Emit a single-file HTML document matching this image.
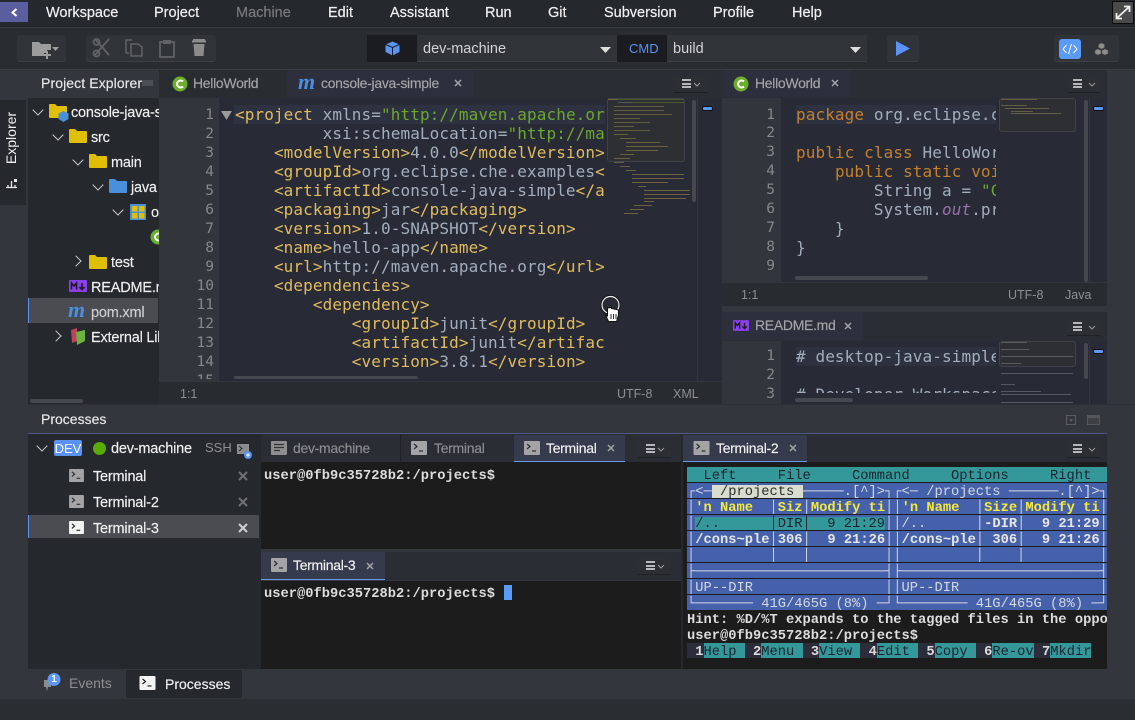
<!DOCTYPE html>
<html><head><meta charset="utf-8"><style>
*{box-sizing:border-box}
html,body{margin:0;padding:0;width:1135px;height:720px;overflow:hidden;background:#2a2d31}
body{position:relative;font-family:"Liberation Sans",sans-serif;font-size:14px;color:#ddd}
.a{position:absolute}
.t{position:absolute;white-space:pre;line-height:18px}
.m{position:absolute;top:4px;font-size:14.5px;line-height:18px;color:#f0f0f0;white-space:pre;-webkit-text-stroke:.2px}
.tab{position:absolute;color:#a3a5a8;font-size:14px;letter-spacing:-.3px;white-space:pre;line-height:18px;-webkit-text-stroke:.15px}
.ed{position:absolute;overflow:hidden;font-family:"DejaVu Sans Mono",monospace;font-size:16px;letter-spacing:.1px;color:#a2aebd}
.l{position:absolute;left:0;white-space:pre;height:19px;line-height:19px}
.n{position:absolute;font-family:"DejaVu Sans Mono",monospace;font-size:14.5px;color:#85888d;text-align:right;width:30px;line-height:19px;height:19px}
.y{color:#e1bb5f}.g{color:#6ca72f}.k{color:#c5802d}.p{color:#9672a8}
.tr{position:absolute;white-space:pre;color:#f0f0f0;font-size:14.5px;line-height:20px;letter-spacing:-.2px;-webkit-text-stroke:.15px}
.ch{position:absolute;width:8px;height:8px;border-right:1.6px solid #ccc;border-bottom:1.6px solid #ccc;transform:rotate(45deg)}
.cr{position:absolute;width:8px;height:8px;border-right:1.6px solid #ccc;border-bottom:1.6px solid #ccc;transform:rotate(-45deg)}
.term{position:absolute;font-family:"Liberation Mono",monospace;font-size:13.75px;line-height:20px;white-space:pre;font-weight:bold;color:#dcdcdc}
.r{position:absolute;left:687px;width:420px;height:15px;overflow:hidden;font-family:"Liberation Mono",monospace;font-size:13.75px;line-height:20px;white-space:pre;background:#4561ac;color:#e6e6e6;font-weight:bold}
.d{font-weight:normal;color:#1c2430}.w{font-weight:normal;color:#d4d8e0}.ye{color:#f5e83a}
.st{position:absolute;color:#8c8f93;font-size:12.5px;line-height:16px;white-space:pre}
svg{position:absolute;overflow:visible}
.mnu{position:absolute;width:33px;height:17px;background:#2b2e33;border-bottom:1px solid #1e2024}
.mnu i{position:absolute;left:6px;width:9px;height:2px;background:#b5b7ba}
</style></head><body>
<svg width="0" height="0" style="position:absolute"><defs>
<symbol id="fold" viewBox="0 0 18 16"><path d="M0 2a1 1 0 0 1 1-1h5l2 2h9a1 1 0 0 1 1 1v10a1 1 0 0 1-1 1H1a1 1 0 0 1-1-1z" fill="#dfbf00"/></symbol>
<symbol id="bfold" viewBox="0 0 18 16"><path d="M0 2a1 1 0 0 1 1-1h5l2 2h9a1 1 0 0 1 1 1v10a1 1 0 0 1-1 1H1a1 1 0 0 1-1-1z" fill="#4a8fdc"/></symbol>
<symbol id="ti" viewBox="0 0 16 14"><rect width="16" height="14" rx="1" fill="#a4a4a6"/><path d="M3 3l3 2.500L3 8" fill="none" stroke="#2a2d35" stroke-width="1.200"/><path d="M8 10h4" stroke="#2a2d35" stroke-width="1.200"/></symbol>
<symbol id="tw" viewBox="0 0 16 14"><rect width="16" height="14" rx="1" fill="#f4f4f4"/><path d="M3 3l3 2.500L3 8" fill="none" stroke="#222" stroke-width="1.200"/><path d="M8 10h4" stroke="#222" stroke-width="1.200"/></symbol>
<symbol id="md" viewBox="0 0 18 12"><rect width="18" height="12" rx="1" fill="#8a3ff0"/><path d="M2.500 9.500V3l2.500 3 2.500-3v6.500M13 3v6M10.500 7l2.500 2.500L15.500 7" fill="none" stroke="#1d1d22" stroke-width="1.600"/></symbol>
<symbol id="xx" viewBox="0 0 8 8"><path d="M1 1l6 6M7 1L1 7" stroke="#a3a5a8" stroke-width="1.500"/></symbol>
<symbol id="cv" viewBox="0 0 8 5"><path d="M1 1l3 3 3-3" fill="none" stroke="#999"/></symbol>
</defs></svg>

<!-- menu -->
<div class="a" style="left:0;top:0;width:1135px;height:28px;background:#25282d;border-bottom:1px solid #383b40"></div>
<div class="a" style="left:0;top:2px;width:28px;height:20px;background:#5a5e9e"></div>
<svg style="left:10px;top:8px" width="8" height="9"><path d="M6.500 1L2.500 4.500l4 3.500" fill="none" stroke="#fff" stroke-width="2"/></svg>
<div class="m" style="left:46px">Workspace</div><div class="m" style="left:154px">Project</div><div class="m" style="left:236px;color:#77797c">Machine</div><div class="m" style="left:328px">Edit</div><div class="m" style="left:390px">Assistant</div><div class="m" style="left:485px">Run</div><div class="m" style="left:548px">Git</div><div class="m" style="left:604px">Subversion</div><div class="m" style="left:713px">Profile</div><div class="m" style="left:792px">Help</div>
<div class="a" style="left:1112px;top:1px;width:22px;height:23px;background:#4a4a4a;border:1px solid #0c0c0c"></div>
<svg style="left:1115px;top:5px" width="16" height="15"><path d="M2 13L14 2M9 1.500h5.500V7M7 13.500H1.500V8" fill="none" stroke="#eee" stroke-width="1.800"/></svg>

<!-- toolbar -->
<div class="a" style="left:0;top:28px;width:1135px;height:42px;background:#292c31;border-bottom:1px solid #3a3d42"></div>
<div class="a" style="left:17px;top:35px;width:49px;height:27px;background:#303338;border-radius:3px;border-bottom:1px solid #3d4045"></div>
<svg style="left:32px;top:40px" width="28" height="18"><path d="M0 2h7l2 2h10v6h-4v3h-3v3H0z" fill="#9c9c9c"/><path d="M11 15h8M15 11v8" stroke="#9c9c9c" stroke-width="2"/><path d="M20 7h7l-3.500 4z" fill="#9c9c9c"/></svg>
<div class="a" style="left:86px;top:35px;width:130px;height:27px;background:#303338;border-radius:3px;border-bottom:1px solid #3d4045"></div>
<svg style="left:92px;top:38px" width="20" height="20"><path d="M3 1l14 16M17 1L3 17" stroke="#606267" stroke-width="1.800" fill="none"/><circle cx="4.500" cy="15.500" r="3" fill="none" stroke="#606267" stroke-width="1.800"/><circle cx="4.500" cy="4" r="3" fill="none" stroke="#606267" stroke-width="1.800"/></svg>
<svg style="left:125px;top:39px" width="19" height="19"><path d="M7 1H1v13h3M6 5h7l4 3v9H6z" fill="none" stroke="#606267" stroke-width="1.500"/></svg>
<svg style="left:159px;top:39px" width="16" height="19"><path d="M4 3H1v15h14V3h-3" fill="none" stroke="#606267" stroke-width="1.800"/><rect x="4" y="1" width="8" height="4" fill="#606267"/></svg>
<svg style="left:192px;top:39px" width="14" height="18"><path d="M0 2.500h14M1 1h12" stroke="#8b8b8b" stroke-width="2"/><path d="M1.500 5h11l-1 12h-9z" fill="#8b8b8b"/></svg>

<div class="a" style="left:367px;top:35px;width:500px;height:27px;background:#303338;border-bottom:1px solid #3d4045"></div>
<div class="a" style="left:367px;top:35px;width:50px;height:27px;background:#1b1c1f"></div>
<div class="a" style="left:617px;top:35px;width:50px;height:27px;background:#1b1c1f"></div>
<svg style="left:385px;top:41px" width="15" height="15"><path d="M7.500 0.500L14.500 3.500V11L7.500 14.500L0.500 11V3.500z" fill="#5a93f0"/><path d="M0.500 3.500L7.500 6.500L14.500 3.500M7.500 6.500V14.500" stroke="#1b1c1f" fill="none"/></svg>
<div class="t" style="left:423px;top:40px;color:#d2d4d6;font-size:14.5px">dev-machine</div>
<div class="t" style="left:629px;top:40px;color:#5a93f0;font-size:13px">CMD</div>
<div class="t" style="left:673px;top:40px;color:#d2d4d6;font-size:14.5px">build</div>
<svg style="left:600px;top:47px" width="11" height="6"><path d="M0 0h11L5.500 6z" fill="#ddd"/></svg>
<svg style="left:850px;top:47px" width="11" height="6"><path d="M0 0h11L5.500 6z" fill="#ddd"/></svg>
<div class="a" style="left:887px;top:35px;width:32px;height:27px;background:#303338;border-radius:3px;border-bottom:1px solid #3d4045"></div>
<svg style="left:896px;top:41px" width="14" height="15"><path d="M0 0l14 7.500L0 15z" fill="#5a93f5"/></svg>
<div class="a" style="left:1054px;top:35px;width:65px;height:27px;background:#303338;border-radius:3px;border-bottom:1px solid #3d4045"></div>
<div class="a" style="left:1059px;top:39px;width:22px;height:20px;background:#5a9af8;border-radius:3px"></div>
<svg style="left:1062px;top:44px" width="16" height="10"><path d="M4.500 1L1 5l3.500 4M11.500 1L15 5l-3.500 4M9.500 0L6.500 10" fill="none" stroke="#fff" stroke-width="1"/></svg>
<svg style="left:1094px;top:42px" width="15" height="14"><path d="M7.500 1l3 1.500v3l-3 1.500-3-1.500v-3zM4 7l3 1.500v3L4 13 1 11.500v-3zM11 7l3 1.500v3L11 13l-3-1.500v-3z" fill="#8e8e8e" stroke="#555" stroke-width=".6"/></svg>

<!-- body bg -->
<div class="a" style="left:0;top:70px;width:1135px;height:630px;background:#33363c"></div>
<div class="a" style="left:0;top:100px;width:26px;height:105px;background:#25282d"></div>
<div class="t" style="left:-19px;top:129px;width:60px;transform:rotate(-90deg);color:#f0f0f0;font-size:14px;text-align:center">Explorer</div>
<svg style="left:5px;top:178px" width="13" height="11"><path d="M1 9.500h11M3 9.500V7M10 9.500V7M6.500 9.500V3" stroke="#e8e8e8" stroke-width="1.300" fill="none"/><path d="M9 1h3v3H9z" fill="#e8e8e8"/></svg>

<!-- project explorer -->
<div class="a" style="left:28px;top:98px;width:131px;height:307px;background:#25282d"></div>
<div class="t" style="left:41px;top:74px;color:#e8e8e8;font-size:14px;letter-spacing:.1px;-webkit-text-stroke:.15px">Project Explorer</div>
<div class="a" style="left:142px;top:80px;width:11px;height:6px;background:#55585d;opacity:.7"></div>
<div class="a" style="left:28px;top:298px;width:130px;height:25px;background:#4a4c52;border-left:1px solid #5a93f5"></div>
<div class="ch" style="left:34px;top:106px"></div><div class="ch" style="left:54px;top:131px"></div><div class="ch" style="left:74px;top:156px"></div><div class="ch" style="left:94px;top:181px"></div><div class="ch" style="left:114px;top:206px"></div>
<div class="cr" style="left:72px;top:257px"></div><div class="cr" style="left:52px;top:332px"></div>
<div class="a" style="left:28px;top:98px;width:131px;height:307px;overflow:hidden">
<svg style="left:21px;top:5px" width="18" height="16"><use href="#fold"/></svg>
<svg style="left:30px;top:13px" width="11" height="11"><path d="M5.500 0L10.500 2.500V8L5.500 11L.5 8V2.500z" fill="#4a8fdc"/></svg>
<svg style="left:41px;top:30px" width="18" height="16"><use href="#fold"/></svg>
<svg style="left:61px;top:55px" width="18" height="16"><use href="#fold"/></svg>
<svg style="left:81px;top:80px" width="18" height="16"><use href="#bfold"/></svg>
<svg style="left:101px;top:105px" width="18" height="18"><rect x="1" y="1" width="16" height="16" fill="#4a8fdc"/><rect x="3" y="3" width="5.500" height="5.500" fill="#dfbf00"/><rect x="10" y="3" width="5.500" height="5.500" fill="#dfbf00"/><rect x="3" y="10" width="5.500" height="5.500" fill="#dfbf00"/><rect x="10" y="10" width="5.500" height="5.500" fill="#dfbf00"/></svg>
<svg style="left:121px;top:130px" width="18" height="18"><circle cx="9" cy="9" r="7.500" fill="#6aae2b"/><path d="M12 6.500a3.500 3.500 0 1 0 0 5" fill="none" stroke="#fff" stroke-width="2"/></svg>
<svg style="left:61px;top:156px" width="18" height="16"><use href="#fold"/></svg>
<div class="tr" style="left:43px;top:5px">console-java-simple</div>
<div class="tr" style="left:63px;top:30px">src</div>
<div class="tr" style="left:83px;top:55px">main</div>
<div class="tr" style="left:103px;top:80px">java</div>
<div class="tr" style="left:123px;top:105px">org</div>
<div class="tr" style="left:83px;top:155px">test</div>
<div class="tr" style="left:63px;top:180px">README.md</div>
<div class="tr" style="left:63px;top:205px;color:#cfd0d2">pom.xml</div>
<div class="tr" style="left:63px;top:230px">External Libraries</div>
</div>
<svg style="left:69px;top:280px" width="18" height="12"><use href="#md"/></svg>
<div class="a" style="left:68px;top:301px;width:21px;height:20px;color:#4a90e2;font:italic bold 22px/18px 'Liberation Serif',serif">m</div>
<svg style="left:70px;top:327px" width="17" height="18"><path d="M1 3l6-2v13l-5 2z" fill="#c2405e"/><path d="M6 5l9-2v11l-8 4z" fill="#6bb33f"/></svg>
<div class="a" style="left:30px;top:399px;width:53px;height:4px;background:#45484e;border-radius:2px"></div>

<!-- editor1 -->
<div class="a" style="left:159px;top:70px;width:563px;height:28px;background:#2a2d33"></div>
<div class="a" style="left:159px;top:70px;width:128px;height:27px;background:#292c31"></div>
<div class="a" style="left:287px;top:70px;width:186px;height:27px;background:#2d303c"></div>
<svg style="left:172px;top:76px" width="16" height="16"><circle cx="8" cy="8" r="7.500" fill="#6aae2b"/><path d="M11 5.500a3.500 3.500 0 1 0 0 5" fill="none" stroke="#fff" stroke-width="2"/></svg>
<div class="tab" style="left:193px;top:74px">HelloWorld</div>
<div class="a" style="left:298px;top:72px;color:#4a90e2;font:italic bold 22px/20px 'Liberation Serif',serif">m</div>
<div class="tab" style="left:321px;top:74px">console-java-simple</div>
<svg style="left:454px;top:79px" width="8" height="8"><use href="#xx"/></svg>
<div class="mnu" style="left:674px;top:76px"><i style="top:3px;left:8px"></i><i style="top:7px;left:8px"></i><i style="top:10px;left:8px"></i></div>
<svg style="left:693px;top:82px" width="8" height="5"><use href="#cv"/></svg>
<div class="a" style="left:161px;top:98px;width:58px;height:283px;background:#32353b"></div>
<div class="a" style="left:219px;top:98px;width:503px;height:283px;background:#282b35"></div>
<div class="a" style="left:234px;top:105px;width:371px;height:19px;background:#2e3240"></div>
<svg style="left:221px;top:111px" width="11" height="9"><path d="M0 0h11L5.500 9z" fill="#9a9a9a"/></svg>
<div class="a" style="left:161px;top:98px;width:56px;height:281px;overflow:hidden">
<div class="n" style="left:23px;top:8px">1</div><div class="n" style="left:23px;top:27px">2</div><div class="n" style="left:23px;top:46px">3</div><div class="n" style="left:23px;top:65px">4</div><div class="n" style="left:23px;top:84px">5</div><div class="n" style="left:23px;top:103px">6</div><div class="n" style="left:23px;top:122px">7</div><div class="n" style="left:23px;top:141px">8</div><div class="n" style="left:23px;top:160px">9</div><div class="n" style="left:23px;top:179px">10</div><div class="n" style="left:23px;top:198px">11</div><div class="n" style="left:23px;top:217px">12</div><div class="n" style="left:23px;top:236px">13</div><div class="n" style="left:23px;top:255px">14</div><div class="n" style="left:23px;top:274px">15</div>
</div>
<div class="ed" style="left:235px;top:105px;width:370px;height:276px">
<div class="l" style="top:0"><span class="y">&lt;project</span> xmlns=<span class="g">"http://maven.apache.org/POM/4.0.0"</span></div>
<div class="l" style="top:19px">         xsi:schemaLocation=<span class="g">"http://maven.apache.org"</span></div>
<div class="l" style="top:38px">    <span class="y">&lt;modelVersion&gt;</span>4.0.0<span class="y">&lt;/modelVersion&gt;</span></div>
<div class="l" style="top:57px">    <span class="y">&lt;groupId&gt;</span>org.eclipse.che.examples<span class="y">&lt;/groupId&gt;</span></div>
<div class="l" style="top:76px">    <span class="y">&lt;artifactId&gt;</span>console-java-simple<span class="y">&lt;/artifactId&gt;</span></div>
<div class="l" style="top:95px">    <span class="y">&lt;packaging&gt;</span>jar<span class="y">&lt;/packaging&gt;</span></div>
<div class="l" style="top:114px">    <span class="y">&lt;version&gt;</span>1.0-SNAPSHOT<span class="y">&lt;/version&gt;</span></div>
<div class="l" style="top:133px">    <span class="y">&lt;name&gt;</span>hello-app<span class="y">&lt;/name&gt;</span></div>
<div class="l" style="top:152px">    <span class="y">&lt;url&gt;</span>http://maven.apache.org<span class="y">&lt;/url&gt;</span></div>
<div class="l" style="top:171px">    <span class="y">&lt;dependencies&gt;</span></div>
<div class="l" style="top:190px">        <span class="y">&lt;dependency&gt;</span></div>
<div class="l" style="top:209px">            <span class="y">&lt;groupId&gt;</span>junit<span class="y">&lt;/groupId&gt;</span></div>
<div class="l" style="top:228px">            <span class="y">&lt;artifactId&gt;</span>junit<span class="y">&lt;/artifactId&gt;</span></div>
<div class="l" style="top:247px">            <span class="y">&lt;version&gt;</span>3.8.1<span class="y">&lt;/version&gt;</span></div>
</div>
<div class="a" style="left:234px;top:376px;width:184px;height:3px;background:#45484e;border-radius:2px"></div>
<!-- minimap 1 -->
<div class="a" style="left:607px;top:98px;width:78px;height:64px;background:#2d2f33;border:1px solid #3f4248;border-radius:3px"></div>
<svg style="left:608px;top:98px;opacity:.5" width="78" height="108" stroke-width="1">
<path d="M0 1.500h10" stroke="#b59a50"/><path d="M10 1.500h66" stroke="#5d8a30"/><path d="M10 4.500h14" stroke="#7b8490"/><path d="M24 4.500h52" stroke="#5d8a30"/>
<path d="M6 8.500h50M6 12.500h50M6 16.500h58M6 20.500h26M6 24.500h36M6 28.500h20M6 32.500h36" stroke="#9c8a55"/>
<path d="M6 36.500h14M12 40.500h16M18 44.500h34M18 48.500h42M18 52.500h32M12 56.500h14M6 60.500h16M6 64.500h10M12 68.500h10M18 72.500h10" stroke="#a8914f"/>
<path d="M24 76.500h52M24 80.500h52M24 84.500h36M30 88.500h8M36 92.500h46M36 96.500h46M36 100.500h42" stroke="#b59a50"/>
</svg>
<svg style="left:608px;top:170px;opacity:.5" width="78" height="36"><path d="M36 31.500h10M26 35.500h18M22 39.500h14M16 43.500h14" stroke="#b59a50"/></svg>
<div class="a" style="left:692px;top:100px;width:4px;height:102px;background:#45484e;border-radius:2px"></div>
<div class="a" style="left:697px;top:98px;width:1px;height:283px;background:#33363e"></div>
<div class="a" style="left:702px;top:106px;width:11px;height:5px;background:#5a9af8;border:1px solid #111;border-radius:2px"></div>
<div class="a" style="left:159px;top:381px;width:563px;height:24px;background:#282b30;border-top:1px solid #33363c"></div>
<div class="st" style="left:180px;top:386px">1:1</div><div class="st" style="left:617px;top:386px">UTF-8</div><div class="st" style="left:673px;top:386px">XML</div>
<div class="a" style="left:28px;top:404px;width:1107px;height:1px;background:#2d2f34"></div>

<!-- editor2 -->
<div class="a" style="left:722px;top:70px;width:385px;height:28px;background:#2a2d33"></div>
<div class="a" style="left:722px;top:70px;width:128px;height:27px;background:#2d303c"></div>
<svg style="left:733px;top:76px" width="16" height="16"><circle cx="8" cy="8" r="7.500" fill="#6aae2b"/><path d="M11 5.500a3.500 3.500 0 1 0 0 5" fill="none" stroke="#fff" stroke-width="2"/></svg>
<div class="tab" style="left:755px;top:74px">HelloWorld</div>
<svg style="left:831px;top:79px" width="8" height="8"><use href="#xx"/></svg>
<div class="mnu" style="left:1067px;top:76px"><i style="top:3px"></i><i style="top:7px"></i><i style="top:10px"></i></div>
<svg style="left:1088px;top:82px" width="8" height="5"><use href="#cv"/></svg>
<div class="a" style="left:722px;top:98px;width:59px;height:184px;background:#32353b"></div>
<div class="a" style="left:781px;top:98px;width:326px;height:184px;background:#282b35"></div>
<div class="a" style="left:796px;top:105px;width:200px;height:19px;background:#2e3240"></div>
<div class="n" style="left:745px;top:106px">1</div><div class="n" style="left:745px;top:124px">2</div><div class="n" style="left:745px;top:143px">3</div><div class="n" style="left:745px;top:162px">4</div><div class="n" style="left:745px;top:181px">5</div><div class="n" style="left:745px;top:200px">6</div><div class="n" style="left:745px;top:219px">7</div><div class="n" style="left:745px;top:238px">8</div><div class="n" style="left:745px;top:257px">9</div>
<div class="ed" style="left:796px;top:105px;width:200px;height:176px">
<div class="l" style="top:0"><span class="k">package</span> org.eclipse.che.examples;</div>
<div class="l" style="top:38px"><span class="k">public class</span> HelloWorld {</div>
<div class="l" style="top:57px">    <span class="k">public static void</span> main(</div>
<div class="l" style="top:76px">        String a = <span class="g">"Che"</span>;</div>
<div class="l" style="top:95px">        System.<i class="p">out</i>.println();</div>
<div class="l" style="top:114px">    }</div>
<div class="l" style="top:133px">}</div>
</div>
<div class="a" style="left:795px;top:276px;width:133px;height:4px;background:#45484e;border-radius:2px"></div>
<div class="a" style="left:999px;top:98px;width:77px;height:34px;background:#2d2f33;border:1px solid #3f4248;border-radius:3px"></div>
<svg style="left:1000px;top:98px;opacity:.6" width="76" height="20"><path d="M1 1.500h36" stroke="#8e7a45"/><path d="M1 7.500h26M5 10.500h44M11 13.500h22M11 15.500h50" stroke="#8a7d55"/></svg>
<div class="a" style="left:1084px;top:100px;width:4px;height:182px;background:#45484e;border-radius:2px"></div>
<div class="a" style="left:1089px;top:98px;width:1px;height:184px;background:#33363e"></div>
<div class="a" style="left:1093px;top:106px;width:11px;height:5px;background:#5a9af8;border:1px solid #111;border-radius:2px"></div>
<div class="a" style="left:722px;top:282px;width:385px;height:24px;background:#282b30;border-top:1px solid #33363c"></div>
<div class="st" style="left:741px;top:287px">1:1</div><div class="st" style="left:1008px;top:287px">UTF-8</div><div class="st" style="left:1065px;top:287px">Java</div>

<!-- readme -->
<div class="a" style="left:722px;top:312px;width:385px;height:29px;background:#2a2d33"></div>
<div class="a" style="left:722px;top:312px;width:141px;height:28px;background:#2d303c"></div>
<svg style="left:733px;top:320px" width="16" height="11"><use href="#md"/></svg>
<div class="tab" style="left:755px;top:316px">README.md</div>
<svg style="left:844px;top:322px" width="8" height="8"><use href="#xx"/></svg>
<div class="mnu" style="left:1067px;top:319px"><i style="top:3px"></i><i style="top:7px"></i><i style="top:10px"></i></div>
<svg style="left:1088px;top:325px" width="8" height="5"><use href="#cv"/></svg>
<div class="a" style="left:722px;top:341px;width:59px;height:63px;background:#32353b"></div>
<div class="a" style="left:781px;top:341px;width:326px;height:63px;background:#282b35"></div>
<div class="a" style="left:796px;top:347px;width:200px;height:19px;background:#2e3240"></div>
<div class="n" style="left:745px;top:347px">1</div><div class="n" style="left:745px;top:366px">2</div><div class="n" style="left:745px;top:385px">3</div>
<div class="ed" style="left:796px;top:347px;width:200px;height:46px">
<div class="l" style="top:0"># desktop-java-simple</div>
<div class="l" style="top:38px"># Developer Workspace</div>
</div>
<div class="a" style="left:795px;top:398px;width:58px;height:4px;background:#45484e;border-radius:2px"></div>
<div class="a" style="left:999px;top:341px;width:77px;height:26px;background:#2d2f33;border:1px solid #3f4248;border-radius:3px"></div>
<svg style="left:1000px;top:341px;opacity:.55" width="76" height="63"><path d="M1 1.500h26M1 8.500h28M1 15.500h72M1 22.500h20M1 32.500h72M1 43.500h14M1 50.500h40M1 53.500h70M1 61.500h72" stroke="#7d8088"/></svg>
<div class="a" style="left:1084px;top:343px;width:4px;height:36px;background:#45484e;border-radius:2px"></div>
<div class="a" style="left:1089px;top:341px;width:1px;height:63px;background:#33363e"></div>
<div class="a" style="left:1093px;top:349px;width:11px;height:5px;background:#5a9af8;border:1px solid #111;border-radius:2px"></div>

<!-- cursor -->
<svg style="left:598px;top:293px" width="28" height="34"><circle cx="12.500" cy="12" r="9.500" fill="none" stroke="#111" stroke-width="1"/><circle cx="12.500" cy="12" r="8.500" fill="none" stroke="#eee" stroke-width="1.200"/><path d="M9.500 15v8l-2-1 3 6.500h8l2-6.500v-5l-7-1.500v-1z" fill="#fff" stroke="#111" stroke-width="1"/><path d="M13 21v5M15.500 21v5M18 21v5" stroke="#111" stroke-width=".9"/></svg>

<!-- processes -->
<div class="t" style="left:41px;top:410px;color:#e8e8e8;font-size:14px;-webkit-text-stroke:.15px">Processes</div>
<div class="a" style="left:28px;top:433px;width:1079px;height:1px;background:#4d5b86"></div>
<svg style="left:1066px;top:415px" width="34" height="11"><rect x=".5" y=".5" width="9" height="9" fill="none" stroke="#5b5d62"/><path d="M3 4h4L5 7z" fill="#5b5d62"/><rect x="21" y="0" width="13" height="10" fill="#55575c"/><rect x="22" y="3" width="11" height="6" fill="#3c3f44"/></svg>
<div class="a" style="left:28px;top:434px;width:233px;height:235px;background:#25282d"></div>
<div class="ch" style="left:38px;top:442px"></div>
<div class="a" style="left:54px;top:440px;width:28px;height:16px;background:#5a93f5;border-radius:2px;color:#fff;font-size:13px;line-height:17px;text-align:center">DEV</div>
<div class="a" style="left:93px;top:442px;width:13px;height:13px;border-radius:50%;background:#58ad00"></div>
<div class="tr" style="left:111px;top:439px">dev-machine</div>
<div class="t" style="left:205px;top:439px;color:#8d8f93;font-size:13px">SSH</div>
<svg style="left:237px;top:444px" width="16" height="16"><rect width="12" height="10" fill="#8b8c90"/><path d="M2 2l3 2.500L2 7" fill="none" stroke="#222"/><circle cx="11" cy="11" r="4" fill="#5a93f5"/><path d="M9 11h4M11 9v4" stroke="#fff"/></svg>
<svg style="left:69px;top:469px" width="15" height="13"><use href="#ti"/></svg>
<div class="tr" style="left:93px;top:467px">Terminal</div>
<svg style="left:69px;top:495px" width="15" height="13"><use href="#ti"/></svg>
<div class="tr" style="left:93px;top:493px">Terminal-2</div>
<div class="a" style="left:28px;top:515px;width:231px;height:23px;background:#4a4c52;border-left:1px solid #5a93f5"></div>
<svg style="left:69px;top:521px" width="15" height="13"><use href="#tw"/></svg>
<div class="tr" style="left:93px;top:519px">Terminal-3</div>
<svg style="left:238px;top:471px" width="10" height="10"><path d="M1 1l8 8M9 1L1 9" stroke="#6e7074" stroke-width="2"/></svg>
<svg style="left:238px;top:497px" width="10" height="10"><path d="M1 1l8 8M9 1L1 9" stroke="#6e7074" stroke-width="2"/></svg>
<svg style="left:238px;top:523px" width="10" height="10"><path d="M1 1l8 8M9 1L1 9" stroke="#cfd0d2" stroke-width="2"/></svg>

<!-- terminal tabs 1 -->
<div class="a" style="left:261px;top:434px;width:420px;height:28px;background:#2a2d33"></div>
<div class="a" style="left:400px;top:434px;width:1px;height:28px;background:#1f2125"></div>
<div class="a" style="left:514px;top:435px;width:111px;height:27px;background:#363a4d;border-bottom:1px solid #6a9be8"></div>
<svg style="left:271px;top:441px" width="16" height="14"><rect width="16" height="14" rx="1" fill="#8e8e8e"/><path d="M3 3.500h10M3 6.500h10M3 9.500h6" stroke="#333" stroke-width="1.200"/></svg>
<div class="tab" style="left:293px;top:439px;color:#8b8d91">dev-machine</div>
<svg style="left:411px;top:441px" width="16" height="14"><use href="#ti"/></svg>
<div class="tab" style="left:434px;top:439px;color:#8b8d91">Terminal</div>
<svg style="left:524px;top:441px" width="16" height="14"><use href="#ti"/></svg>
<div class="tab" style="left:546px;top:439px;color:#f0f0f0">Terminal</div>
<svg style="left:607px;top:444px" width="8" height="8"><use href="#xx"/></svg>
<div class="mnu" style="left:638px;top:441px"><i style="top:3px;left:8px"></i><i style="top:7px;left:8px"></i><i style="top:10px;left:8px"></i></div>
<svg style="left:657px;top:447px" width="8" height="5"><use href="#cv"/></svg>
<div class="a" style="left:261px;top:462px;width:420px;height:87px;background:#1c1c1c"></div>
<div class="term" style="left:264px;top:467px">user@0fb9c35728b2:/projects$</div>
<div class="a" style="left:261px;top:549px;width:420px;height:3px;background:#33363c"></div>
<div class="a" style="left:261px;top:552px;width:420px;height:28px;background:#2a2d33"></div>
<div class="a" style="left:261px;top:552px;width:124px;height:28px;background:#363a4d;border-bottom:1px solid #6a9be8"></div>
<svg style="left:271px;top:558px" width="16" height="14"><use href="#ti"/></svg>
<div class="tab" style="left:293px;top:556px;color:#f0f0f0">Terminal-3</div>
<svg style="left:366px;top:562px" width="8" height="8"><use href="#xx"/></svg>
<div class="mnu" style="left:638px;top:558px"><i style="top:3px;left:8px"></i><i style="top:7px;left:8px"></i><i style="top:10px;left:8px"></i></div>
<svg style="left:657px;top:564px" width="8" height="5"><use href="#cv"/></svg>
<div class="a" style="left:261px;top:581px;width:420px;height:88px;background:#1c1c1c"></div>
<div class="term" style="left:264px;top:585px">user@0fb9c35728b2:/projects$</div>
<div class="a" style="left:504px;top:585px;width:8px;height:15px;background:#5a9af8"></div>

<!-- terminal 2 -->
<div class="a" style="left:681px;top:434px;width:2px;height:235px;background:#25282d"></div>
<div class="a" style="left:683px;top:434px;width:424px;height:28px;background:#2a2d33"></div>
<div class="a" style="left:683px;top:435px;width:124px;height:27px;background:#363a4d;border-bottom:1px solid #6a9be8"></div>
<svg style="left:693px;top:441px" width="17" height="14"><use href="#ti"/></svg>
<div class="tab" style="left:716px;top:439px;color:#f0f0f0">Terminal-2</div>
<svg style="left:789px;top:444px" width="8" height="8"><use href="#xx"/></svg>
<div class="mnu" style="left:1067px;top:441px"><i style="top:3px"></i><i style="top:7px"></i><i style="top:10px"></i></div>
<svg style="left:1088px;top:447px" width="8" height="5"><use href="#cv"/></svg>
<div class="a" style="left:683px;top:462px;width:424px;height:207px;background:#1c1c1c"></div>
<div class="r" style="top:467px;background:#34989a"><span class="d">  Left     File     Command     Options     Right</span></div>
<div class="r" style="top:483px"><span class="w">┌&lt;─<span style="background:#d9ddd0;color:#2a2f2a"> /projects </span>─────.[^]&gt;┐┌&lt;─ /projects ──────.[^]&gt;┐</span></div>
<div class="r" style="top:499px"><span class="w">│</span><span class="ye">'n Name  </span><span class="w">│</span><span class="ye">Siz</span><span class="w">│</span><span class="ye">Modify ti</span><span class="w">││</span><span class="ye">'n Name  </span><span class="w">│</span><span class="ye">Size</span><span class="w">│</span><span class="ye">Modify ti</span><span class="w">│</span></div>
<div class="r" style="top:515px"><span class="w">│</span><span class="d" style="background:#34989a">/..      │DIR│  9 21:29</span><span class="w">││/..      │</span>-DIR<span class="w">│</span>  9 21:29<span class="w">│</span></div>
<div class="r" style="top:531px"><span class="w">│</span>/cons~ple<span class="w">│</span>306<span class="w">│</span>  9 21:26<span class="w">││</span>/cons~ple<span class="w">│</span> 306<span class="w">│</span>  9 21:26<span class="w">│</span></div>
<div class="r" style="top:547px"><span class="w">│         │   │         ││         │    │         │</span></div>
<div class="r" style="top:563px"><span class="w">├───────────────────────┤├────────────────────────┤</span></div>
<div class="r" style="top:579px"><span class="w">│UP--DIR                ││UP--DIR                 │</span></div>
<div class="r" style="top:595px"><span class="w">└─────── 41G/465G (8%) ─┘└──────── 41G/465G (8%) ─┘</span></div>
<div class="term" style="left:687px;top:611px;width:420px;overflow:hidden">Hint: %D/%T expands to the tagged files in the oppo</div>
<div class="term" style="left:687px;top:627px">user@0fb9c35728b2:/projects$</div>
<div class="a" style="left:687px;top:643px;width:404px;height:15px;background:#2b2e3a"></div>
<div class="a" style="left:704px;top:643px;width:41px;height:15px;background:#34989a"></div><div class="a" style="left:761px;top:643px;width:42px;height:15px;background:#34989a"></div><div class="a" style="left:819px;top:643px;width:41px;height:15px;background:#34989a"></div><div class="a" style="left:877px;top:643px;width:41px;height:15px;background:#34989a"></div><div class="a" style="left:935px;top:643px;width:41px;height:15px;background:#34989a"></div><div class="a" style="left:992px;top:643px;width:42px;height:15px;background:#34989a"></div><div class="a" style="left:1050px;top:643px;width:41px;height:15px;background:#34989a"></div>
<div class="term" style="left:687px;top:643px"> 1<span class="d">Help </span> 2<span class="d">Menu </span> 3<span class="d">View </span> 4<span class="d">Edit </span> 5<span class="d">Copy </span> 6<span class="d">Re-ov</span> 7<span class="d">Mkdir</span></div>

<!-- bottom -->
<div class="a" style="left:126px;top:670px;width:116px;height:28px;background:#25282d"></div>
<svg style="left:43px;top:673px" width="20" height="20"><path d="M1 7h7v7l-3 0-1 4-1-4H1z" fill="#8b8c90"/><circle cx="11" cy="6.500" r="6.500" fill="#5a9af8"/></svg>
<div class="a" style="left:48px;top:674px;width:12px;text-align:center;color:#fff;font-size:10px;font-weight:bold;line-height:12px">1</div>
<div class="t" style="left:69px;top:674px;color:#8d8f93;font-size:14px">Events</div>
<svg style="left:139px;top:676px" width="17" height="14"><use href="#tw"/></svg>
<div class="t" style="left:165px;top:675px;color:#f0f0f0;font-size:14px;-webkit-text-stroke:.15px">Processes</div>
<div class="a" style="left:0;top:699px;width:1135px;height:21px;background:#2a2d31"></div>
</body></html>
